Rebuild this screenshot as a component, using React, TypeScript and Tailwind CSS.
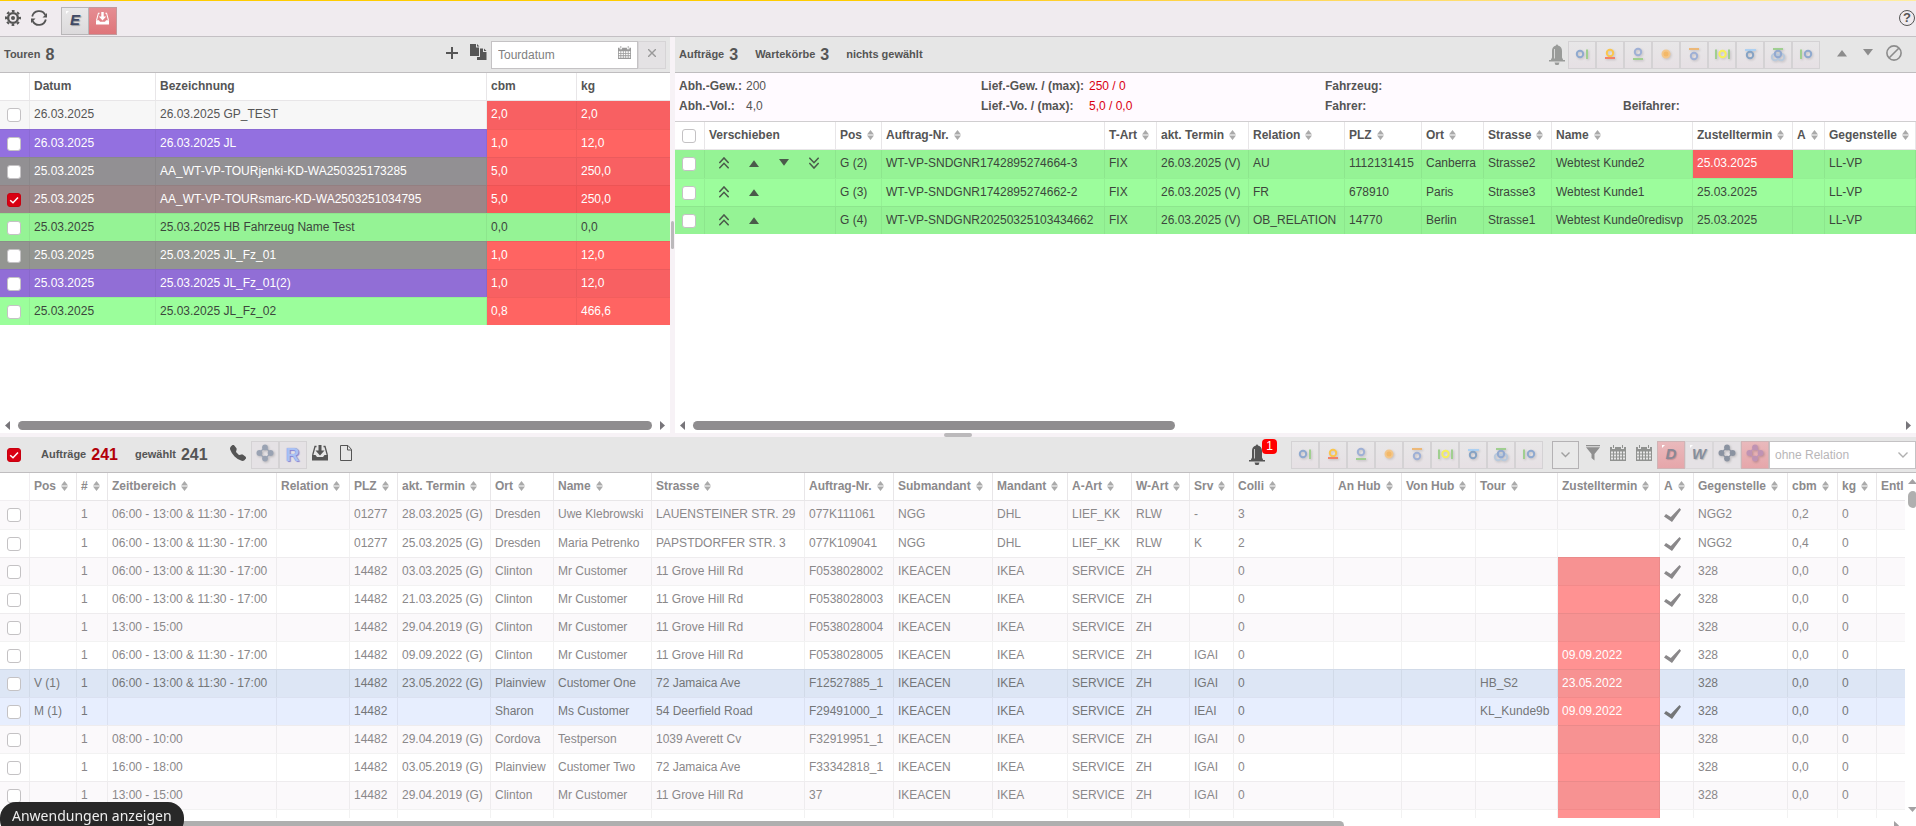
import { useState } from "react";
import type { ReactNode } from "react";
import { BsTelephoneFill } from "react-icons/bs";
import clsx from "clsx";

interface Tour {
  datum: string;
  name: string;
  cbm: string;
  kg: string;
  row: string;
  load: string;
}

const TOUREN: Tour[] = [
  { datum: "26.03.2025", name: "26.03.2025 GP_TEST", cbm: "2,0", kg: "2,0", row: "bg-[#f7f7f7] text-[#555]", load: "bg-[#f86062] text-white" },
  { datum: "26.03.2025", name: "26.03.2025 JL", cbm: "1,0", kg: "12,0", row: "bg-[#9370e0] text-white", load: "bg-[#ff6462] text-white" },
  { datum: "25.03.2025", name: "AA_WT-VP-TOURjenki-KD-WA250325173285", cbm: "5,0", kg: "250,0", row: "bg-[#929093] text-white", load: "bg-[#f86062] text-white" },
  { datum: "25.03.2025", name: "AA_WT-VP-TOURsmarc-KD-WA2503251034795", cbm: "5,0", kg: "250,0", row: "bg-[#9c8688] text-white", load: "bg-[#f9595a] text-white" },
  { datum: "25.03.2025", name: "25.03.2025 HB Fahrzeug Name Test", cbm: "0,0", kg: "0,0", row: "bg-[#95f395] text-[#3c463c]", load: "" },
  { datum: "25.03.2025", name: "25.03.2025 JL_Fz_01", cbm: "1,0", kg: "12,0", row: "bg-[#939591] text-white", load: "bg-[#ff6462] text-white" },
  { datum: "25.03.2025", name: "25.03.2025 JL_Fz_01(2)", cbm: "1,0", kg: "12,0", row: "bg-[#916ed6] text-white", load: "bg-[#f86062] text-white" },
  { datum: "25.03.2025", name: "25.03.2025 JL_Fz_02", cbm: "0,8", kg: "466,6", row: "bg-[#9bfe9b] text-[#3c463c]", load: "bg-[#ff6462] text-white" },
];

const TOUR_COLS = [
  { label: "Verschieben", w: "w-[131px]" },
  { label: "Pos", w: "w-[46px]" },
  { label: "Auftrag-Nr.", w: "w-[223px]" },
  { label: "T-Art", w: "w-[52px]" },
  { label: "akt. Termin", w: "w-[92px]" },
  { label: "Relation", w: "w-[96px]" },
  { label: "PLZ", w: "w-[77px]" },
  { label: "Ort", w: "w-[62px]" },
  { label: "Strasse", w: "w-[68px]" },
  { label: "Name", w: "w-[141px]" },
  { label: "Zustelltermin", w: "w-[100px]" },
  { label: "A", w: "w-[32px]" },
  { label: "Gegenstelle", w: "" },
];

const TOUR_AUFTRAEGE = [
  ["G (2)", "WT-VP-SNDGNR1742895274664-3", "FIX", "26.03.2025 (V)", "AU", "1112131415", "Canberra", "Strasse2", "Webtest Kunde2", "25.03.2025", "", "LL-VP"],
  ["G (3)", "WT-VP-SNDGNR1742895274662-2", "FIX", "26.03.2025 (V)", "FR", "678910", "Paris", "Strasse3", "Webtest Kunde1", "25.03.2025", "", "LL-VP"],
  ["G (4)", "WT-VP-SNDGNR20250325103434662", "FIX", "26.03.2025 (V)", "OB_RELATION", "14770", "Berlin", "Strasse1", "Webtest Kunde0redisvp", "25.03.2025", "", "LL-VP"],
];

const AUFTRAG_COLS = [
  { label: "Pos", w: "w-[47px]" },
  { label: "#", w: "w-[31px]" },
  { label: "Zeitbereich", w: "w-[169px]" },
  { label: "Relation", w: "w-[73px]" },
  { label: "PLZ", w: "w-[48px]" },
  { label: "akt. Termin", w: "w-[93px]" },
  { label: "Ort", w: "w-[63px]" },
  { label: "Name", w: "w-[98px]" },
  { label: "Strasse", w: "w-[153px]" },
  { label: "Auftrag-Nr.", w: "w-[89px]" },
  { label: "Submandant", w: "w-[99px]" },
  { label: "Mandant", w: "w-[75px]" },
  { label: "A-Art", w: "w-[64px]" },
  { label: "W-Art", w: "w-[58px]" },
  { label: "Srv", w: "w-[44px]" },
  { label: "Colli", w: "w-[100px]" },
  { label: "An Hub", w: "w-[68px]" },
  { label: "Von Hub", w: "w-[74px]" },
  { label: "Tour", w: "w-[82px]" },
  { label: "Zustelltermin", w: "w-[102px]" },
  { label: "A", w: "w-[34px]" },
  { label: "Gegenstelle", w: "w-[94px]" },
  { label: "cbm", w: "w-[50px]" },
  { label: "kg", w: "w-[39px]" },
  { label: "Entl", w: "" },
];

interface Auftrag {
  pos?: string;
  zeit?: string;
  plz: string;
  termin?: string;
  ort: string;
  name: string;
  strasse: string;
  nr: string;
  sub?: string;
  mandant?: string;
  aArt?: string;
  wArt?: string;
  srv?: string;
  colli?: string;
  tour?: string;
  zustell?: string;
  late?: boolean;
  avis?: boolean;
  gegen?: string;
  cbm?: string;
}

const ZEIT = "06:00 - 13:00 & 11:30 - 17:00";

const AUFTRAEGE: Auftrag[] = [
  { zeit: ZEIT, plz: "01277", termin: "28.03.2025 (G)", ort: "Dresden", name: "Uwe Klebrowski", strasse: "LAUENSTEINER STR. 29", nr: "077K111061", sub: "NGG", mandant: "DHL", aArt: "LIEF_KK", wArt: "RLW", srv: "-", colli: "3", late: false, avis: true, gegen: "NGG2", cbm: "0,2" },
  { zeit: ZEIT, plz: "01277", termin: "25.03.2025 (G)", ort: "Dresden", name: "Maria Petrenko", strasse: "PAPSTDORFER STR. 3", nr: "077K109041", sub: "NGG", mandant: "DHL", aArt: "LIEF_KK", wArt: "RLW", srv: "K", colli: "2", late: false, avis: true, gegen: "NGG2", cbm: "0,4" },
  { zeit: ZEIT, plz: "14482", termin: "03.03.2025 (G)", ort: "Clinton", name: "Mr Customer", strasse: "11 Grove Hill Rd", nr: "F0538028002", avis: true },
  { zeit: ZEIT, plz: "14482", termin: "21.03.2025 (G)", ort: "Clinton", name: "Mr Customer", strasse: "11 Grove Hill Rd", nr: "F0538028003", avis: true },
  { zeit: "13:00 - 15:00", plz: "14482", termin: "29.04.2019 (G)", ort: "Clinton", name: "Mr Customer", strasse: "11 Grove Hill Rd", nr: "F0538028004" },
  { zeit: ZEIT, plz: "14482", termin: "09.09.2022 (G)", ort: "Clinton", name: "Mr Customer", strasse: "11 Grove Hill Rd", nr: "F0538028005", srv: "IGAI", zustell: "09.09.2022", avis: true },
  { pos: "V (1)", zeit: ZEIT, plz: "14482", termin: "23.05.2022 (G)", ort: "Plainview", name: "Customer One", strasse: "72 Jamaica Ave", nr: "F12527885_1", srv: "IGAI", tour: "HB_S2", zustell: "23.05.2022" },
  { pos: "M (1)", plz: "14482", ort: "Sharon", name: "Ms Customer", strasse: "54 Deerfield Road", nr: "F29491000_1", srv: "IEAI", tour: "KL_Kunde9b", zustell: "09.09.2022", avis: true },
  { zeit: "08:00 - 10:00", plz: "14482", termin: "29.04.2019 (G)", ort: "Cordova", name: "Testperson", strasse: "1039 Averett Cv", nr: "F32919951_1", srv: "IGAI" },
  { zeit: "16:00 - 18:00", plz: "14482", termin: "03.05.2019 (G)", ort: "Plainview", name: "Customer Two", strasse: "72 Jamaica Ave", nr: "F33342818_1", srv: "IGAI" },
  { zeit: "13:00 - 15:00", plz: "14482", termin: "29.04.2019 (G)", ort: "Clinton", name: "Mr Customer", strasse: "11 Grove Hill Rd", nr: "37", srv: "IGAI" },
];

/* ---------- icons ---------- */

function GearIcon() {
  return (
    <svg width="16" height="16" viewBox="0 0 16 16" fill="none" stroke="#555">
      <circle cx="8" cy="8" r="4.9" strokeWidth="2.4" />
      <circle cx="8" cy="8" r="7" strokeWidth="2" strokeDasharray="2.75 2.75" strokeDashoffset="1.4" />
      <circle cx="8" cy="8" r="2" fill="#555" stroke="none" />
    </svg>
  );
}

function RefreshIcon() {
  return (
    <svg width="16" height="16" viewBox="0 0 16 16" fill="none" stroke="#555" strokeWidth="1.8">
      <path d="M1.200 6.500A7 7 0 0 1 14.300 5M14.800 9.500A7 7 0 0 1 1.700 11" />
      <path d="M16 3v4.500h-4.500zM0 13V8.500h4.500z" fill="#555" stroke="none" />
    </svg>
  );
}

function InboxIcon({ size, color }: { size: number; color: string }) {
  return (
    <svg width={size} height={size} viewBox="0 0 16 16" fill={color}>
      <path d="M0 10h3.500l1.500 2h6l1.500-2H16v5.500H0z" />
      <path d="M6.500 0h3v5.500h3L8 10.500 3.500 5.500h3z" />
      <path d="M4.500 1.500H3L.7 10M11.500 1.500H13L15.300 10" fill="none" stroke={color} strokeWidth="1.300" />
    </svg>
  );
}

function BellIcon({ color }: { color: string }) {
  return (
    <svg width="16" height="21" viewBox="0 0 16 21" fill={color}>
      <path d="M7 1.500C7 0 9 0 9 1.500c2.800.6 4 2.700 4 5.500v6.500l1.200 2.500H16v1.500H0V16h1.800L3 13.500V7c0-2.800 1.200-4.900 4-5.500z" />
      <path d="M5.500 18.500h5L9.500 21h-3z" />
      <path d="M5.500 5v9.500" stroke="#e6e6e6" strokeWidth=".8" />
    </svg>
  );
}

function CalendarIcon({ size, color, cell = "#e6e6e6" }: { size: number; color: string; cell?: string }) {
  return (
    <svg width={size} height={size} viewBox="0 0 16 16" fill={color}>
      <path d="M0 2h2v2h3V2h6v2h3V2h2v14H0zM3 0h1v3H3zM12 0h1v3h-1z" />
      {[6, 9, 12].map((y) => (
        <path
          key={y}
          d={`M1 ${y + 1.500}h2M4 ${y + 1.500}h2M7 ${y + 1.500}h2M10 ${y + 1.500}h2M13 ${y + 1.500}h2`}
          stroke={cell}
          strokeWidth="2"
        />
      ))}
    </svg>
  );
}

function CopyIcon() {
  return (
    <svg width="17" height="17" viewBox="0 0 17 17" fill="#555">
      <path d="M0 0h6v3.500h3V12H0zM7 0l2.500 2.600H7z" />
      <path d="M6.500 17v-4.500H9.500V3.500h4L17 7v10z" fill="#e6e6e6" />
      <path d="M7 16v-3h3V4.500h3v3.500h3.500V16zM14 4.500L16.500 7H14z" />
    </svg>
  );
}

function DocIcon() {
  return (
    <svg width="12" height="16" viewBox="0 0 12 16" fill="none" stroke="#555">
      <path d="M.5.5h7.500L11.500 4.500v11H.5z" />
      <path d="M7.500.5V5h4" />
    </svg>
  );
}

function FilterIcon() {
  return (
    <svg width="14" height="16" viewBox="0 0 14 16" fill="#8f8f8f">
      <path d="M0 0h14v1.200H0zM0 2.200h14L8.500 9v6.500L5.500 13V9z" />
    </svg>
  );
}

function ClusterIcon({ color }: { color: string }) {
  return (
    <svg width="18" height="18" viewBox="0 0 18 18" fill={color} className="drop-shadow-[1px_1px_1px_rgba(0,0,0,0.2)]">
      <circle cx="9" cy="3.400" r="2.900" />
      <circle cx="3.400" cy="9" r="2.900" />
      <circle cx="14.600" cy="9" r="2.900" />
      <circle cx="9" cy="14.600" r="2.900" />
      <path d="M9 3.200L3.200 9 9 14.800 14.800 9z" fill="none" stroke={color} strokeWidth="1.200" />
    </svg>
  );
}

function CheckIcon({ className }: { className: string }) {
  return (
    <svg width="17" height="14" viewBox="0 0 17 14" className={className} fill="currentColor">
      <path d="M0 8.500L2 6l4.800 3L15.500 0 17 1.800 8 14z" />
    </svg>
  );
}

function SortIcon() {
  return (
    <svg width="7" height="10" viewBox="0 0 7 10" fill="#aaa" className="shrink-0">
      <path d="M3.500 0L7 4.500H0zM3.500 10L7 5.500H0z" />
    </svg>
  );
}

function ArrowIcon({ kind }: { kind: "top" | "up" | "down" | "bottom" }) {
  return (
    <svg width="10" height="12" viewBox="0 0 10 12" fill="none" stroke="#4a5a4a" strokeWidth="1.600">
      {kind === "top" && <path d="M.3 6L5 1l4.700 5M.3 11.300L5 6.300l4.700 5" />}
      {kind === "bottom" && <path d="M.3 .7L5 5.700 9.700.7M.3 6L5 11 9.700 6" />}
      {kind === "up" && <path d="M0 10L5 3.200 10 10z" fill="#4a5a4a" stroke="none" />}
      {kind === "down" && <path d="M0 2L5 8.800 10 2z" fill="#4a5a4a" stroke="none" />}
    </svg>
  );
}

const BLUE = "#8fa9cf";
const GREEN = "#a0cf90";

const MARKERS: { title: string; art: ReactNode }[] = [
  { title: "Danach", art: <><circle cx="11" cy="12" r="3.200" stroke={BLUE} /><path d="M18 7.500v9.500" stroke={GREEN} /></> },
  { title: "Unten rot", art: <><circle cx="13" cy="11" r="3.200" stroke="#fac64e" /><path d="M8 16h10" stroke="#f2826a" /></> },
  { title: "Unten", art: <><circle cx="13" cy="10" r="3.200" stroke="#9fb0d5" /><path d="M8 17h10" stroke={GREEN} /></> },
  { title: "Punkt", art: <><circle cx="13" cy="12" r="3.500" stroke="#f3c68a" fill="#f3b868" /></> },
  { title: "Oben", art: <><path d="M8 7h10" stroke="#ecb878" /><circle cx="13" cy="14" r="3.200" stroke="#9fb0d5" /></> },
  { title: "Zwischen", art: <><path d="M7 7.500v9.500M20 7.500v9.500" stroke={GREEN} /><circle cx="13.500" cy="12" r="3.200" stroke="#f6f05a" /></> },
  { title: "Oben blau", art: <><path d="M8 8h11" stroke="#acd0f2" /><circle cx="13" cy="13" r="3.200" stroke="#86a3c4" /></> },
  { title: "Gruppe", art: <><path d="M8 7h10" stroke={GREEN} /><circle cx="10" cy="15" r="3.200" stroke="#b9c9dc" /><circle cx="16" cy="15" r="3.200" stroke="#b9c9dc" /><circle cx="13" cy="12" r="3.200" stroke="#92a9d0" /></> },
  { title: "Davor", art: <><path d="M8 7.500v9.500" stroke={GREEN} /><circle cx="15" cy="12" r="3.200" stroke={BLUE} /></> },
];

/* ---------- shared parts ---------- */

function MarkerButtons() {
  return (
    <div className="flex">
      {MARKERS.map((m) => (
        <button
          key={m.title}
          aria-label={m.title}
          className="h-7 w-7 border border-[#d4d2d4] bg-linear-to-b from-[#e8e7e8] to-[#e6e0e4]"
        >
          <svg width="26" height="26" viewBox="0 0 26 26" fill="none" strokeWidth="2" className="drop-shadow-[1px_1px_1px_rgba(0,0,0,0.15)]">
            {m.art}
          </svg>
        </button>
      ))}
    </div>
  );
}

/* Bold italic letter with the white dog-ear of a toggle button */
function LetterButton({ letter, className }: { letter: string; className: string }) {
  return (
    <button className={clsx("relative h-7 w-7 border pb-[3px] text-[15px] leading-none font-bold italic", className)}>
      <svg width="3" height="3" viewBox="0 0 3 3" className="absolute top-[3px] left-1" fill="#fff">
        <path d="M0 0h3L0 3z" />
      </svg>
      {letter}
    </button>
  );
}

function Check({ label, defaultChecked = false }: { label: string; defaultChecked?: boolean }) {
  const [checked, setChecked] = useState(defaultChecked);
  return (
    <span className="relative block h-[14px] w-[14px] shrink-0">
      <input
        type="checkbox"
        aria-label={label}
        checked={checked}
        onChange={() => setChecked(!checked)}
        className="block h-[14px] w-[14px] appearance-none rounded-[3px] border border-[#c4c2c4] bg-white checked:border-[#c8000f] checked:bg-[#d90012]"
      />
      {checked && (
        <svg width="14" height="14" viewBox="0 0 14 14" className="pointer-events-none absolute inset-0" fill="none" stroke="#fff" strokeWidth="1.500">
          <path d="M3.200 7.200L6 9.800 11 4.400" />
        </svg>
      )}
    </span>
  );
}

function Th({ label, sort = true, className }: { label: string; sort?: boolean; className?: string }) {
  return (
    <th className={clsx("h-7 border-r border-b border-[#e8e6e8] px-1 pb-[2px] text-left font-bold", className)}>
      <span className="flex items-center gap-[5px]">
        {label}
        {sort && <SortIcon />}
      </span>
    </th>
  );
}

const CELL = "h-7 border-r border-black/5 whitespace-nowrap";
const TEXT = "pb-[2px] pl-1";

function HScroll({ thumb }: { thumb: string }) {
  return (
    <div aria-hidden="true" className="flex h-3 shrink-0 items-start gap-2 px-[5px]">
      <svg width="5" height="9" viewBox="0 0 5 9" fill="#77757a"><path d="M5 0v9L0 4.500z" /></svg>
      <div className="flex-1">
        <div className={clsx("h-[9px] rounded-full bg-[#8f8d8f]", thumb)} />
      </div>
      <svg width="5" height="9" viewBox="0 0 5 9" fill="#77757a"><path d="M0 0v9l5-4.500z" /></svg>
    </div>
  );
}

const BAR = "flex h-9 shrink-0 items-center border-b border-[#bfbdbf] bg-[#e6e6e6] text-[11px] font-bold";

/* ---------- panels ---------- */

function TourenPanel() {
  return (
    <section className="flex min-w-0 flex-col overflow-hidden bg-white">
      <div className={clsx(BAR, "pr-1 pl-1")}>
        <span>Touren</span>
        <span className="ml-[5px] text-base">8</span>
        <button aria-label="Tour anlegen" className="mb-1 ml-auto">
          <svg width="12" height="12" viewBox="0 0 12 12" stroke="#555" strokeWidth="2"><path d="M6 0v12M0 6h12" /></svg>
        </button>
        <button aria-label="Tour kopieren" className="mb-1 ml-3"><CopyIcon /></button>
        <div className="ml-1 flex h-7 w-[147px] items-center border border-[#c4c2c4] bg-white pr-[6px] pl-[6px]">
          <input aria-label="Tourdatum" placeholder="Tourdatum" className="min-w-0 flex-1 text-xs font-normal placeholder:text-[#808080]" />
          <div className="mb-1"><CalendarIcon size={13} color="#999" cell="#fff" /></div>
        </div>
        <button aria-label="Tourdatum löschen" className="flex h-7 w-7 items-center justify-center border border-[#d6d4d6] bg-[#e4e2e4] pb-1">
          <svg width="8" height="8" viewBox="0 0 8 8" stroke="#999" strokeWidth="1.400"><path d="M0 0l8 8M8 0L0 8" /></svg>
        </button>
      </div>
      <div className="min-h-0 flex-1 overflow-hidden">
        <table className="w-full table-fixed border-separate border-spacing-0">
          <colgroup>
            <col className="w-[30px]" />
            <col className="w-[126px]" />
            <col />
            <col className="w-[90px]" />
            <col className="w-[93px]" />
          </colgroup>
          <thead>
            <tr>
              <th className="border-r border-b border-[#e8e6e8]" />
              <Th label="Datum" sort={false} />
              <Th label="Bezeichnung" sort={false} />
              <Th label="cbm" sort={false} />
              <Th label="kg" sort={false} className="border-r-0" />
            </tr>
          </thead>
          <tbody>
            {TOUREN.map((t, i) => {
              const cell = clsx(CELL, i > 0 && "border-t");
              const text = clsx(cell, TEXT);
              return (
                <tr key={t.name} className={t.row}>
                  <td className={clsx(cell, "pl-[7px]")}>
                    <Check label={t.name} defaultChecked={i === 3} />
                  </td>
                  <td className={text}>{t.datum}</td>
                  <td className={text}>{t.name}</td>
                  <td className={clsx(text, t.load)}>{t.cbm}</td>
                  <td className={clsx(text, t.load, "border-r-0")}>{t.kg}</td>
                </tr>
              );
            })}
          </tbody>
        </table>
      </div>
      <HScroll thumb="w-full" />
    </section>
  );
}

function TourDetailPanel() {
  return (
    <section className="flex min-w-0 flex-col overflow-hidden bg-white">
      <div className={clsx(BAR, "pr-[14px] pl-1")}>
        <span>Aufträge</span>
        <span className="ml-[5px] text-base">3</span>
        <span className="ml-[17px]">Wartekörbe</span>
        <span className="ml-[5px] text-base">3</span>
        <span className="ml-[17px]">nichts gewählt</span>
        <button aria-label="Benachrichtigungen" className="mr-[3px] ml-auto"><BellIcon color="#999b99" /></button>
        <MarkerButtons />
        <button aria-label="Nach oben" className="mb-1 ml-[17px]">
          <svg width="10" height="10" viewBox="0 0 10 10" fill="#8c8c8c"><path d="M0 8.500L5 2l5 6.500z" /></svg>
        </button>
        <button aria-label="Nach unten" className="mb-1 ml-4">
          <svg width="10" height="10" viewBox="0 0 10 10" fill="#8c8c8c"><path d="M0 1h10L5 7.500z" /></svg>
        </button>
        <button aria-label="Sperren" className="mb-1 ml-[13px]">
          <svg width="16" height="16" viewBox="0 0 16 16" fill="none" stroke="#8c8c8c" strokeWidth="1.600"><circle cx="8" cy="8" r="7.100" /><path d="M13 3L3 13" /></svg>
        </button>
      </div>
      <div className="grid h-[49px] shrink-0 grid-cols-[302fr_344fr_298fr_293fr] items-start border-b border-[#d0ced0] bg-[#fffaff] pt-[3px] pl-1 leading-5">
        <dl className="grid grid-cols-[67px_1fr]">
          <dt className="font-bold">Abh.-Gew.:</dt>
          <dd>200</dd>
          <dt className="font-bold">Abh.-Vol.:</dt>
          <dd>4,0</dd>
        </dl>
        <dl className="grid grid-cols-[108px_1fr]">
          <dt className="font-bold">Lief.-Gew. / (max):</dt>
          <dd className="text-[#d90012]">250 / 0</dd>
          <dt className="font-bold">Lief.-Vo. / (max):</dt>
          <dd className="text-[#d90012]">5,0 / 0,0</dd>
        </dl>
        <div className="font-bold">
          <p>Fahrzeug:</p>
          <p>Fahrer:</p>
        </div>
        <p className="pt-5 font-bold">Beifahrer:</p>
      </div>
      <div className="min-h-0 flex-1 overflow-hidden">
        <table className="w-full min-w-[1240px] table-fixed border-separate border-spacing-0">
          <colgroup>
            <col className="w-[30px]" />
            {TOUR_COLS.map((c) => <col key={c.label} className={c.w} />)}
          </colgroup>
          <thead>
            <tr>
              <th className="h-7 border-r border-b border-[#e8e6e8] pl-[7px]"><Check label="Alle wählen" /></th>
              {TOUR_COLS.map((c) => <Th key={c.label} label={c.label} sort={c.label !== "Verschieben"} />)}
            </tr>
          </thead>
          <tbody>
            {TOUR_AUFTRAEGE.map((row, i) => {
              const cell = clsx(CELL, i > 0 && "border-t");
              const text = clsx(cell, TEXT);
              return (
                <tr key={row[1]} className={clsx("text-[#3c463c]", i % 2 ? "bg-[#9cfd9c]" : "bg-[#95f395]")}>
                  <td className={clsx(cell, "pl-[7px]")}><Check label={row[1]} /></td>
                  <td className={text}>
                    <div className="grid grid-cols-[repeat(4,30px)]">
                      <button aria-label="Ganz nach oben" className="flex justify-center"><ArrowIcon kind="top" /></button>
                      <button aria-label="Nach oben" className="flex justify-center"><ArrowIcon kind="up" /></button>
                      {i === 0 && <button aria-label="Nach unten" className="flex justify-center"><ArrowIcon kind="down" /></button>}
                      {i === 0 && <button aria-label="Ganz nach unten" className="flex justify-center"><ArrowIcon kind="bottom" /></button>}
                    </div>
                  </td>
                  {row.map((v, c) => (
                    <td key={c} className={clsx(text, i === 0 && c === 9 && "bg-[#f86062] text-white")}>{v}</td>
                  ))}
                </tr>
              );
            })}
          </tbody>
        </table>
      </div>
      <HScroll thumb="w-[40%]" />
    </section>
  );
}

function rowTone(a: Auftrag, i: number) {
  if (a.pos === "V (1)") return "bg-[#dde6f5] text-[#747678]";
  if (a.pos === "M (1)") return "bg-[#e7eefe] text-[#747678]";
  return i % 2 ? "bg-white text-[#8a888a]" : "bg-[#fbf9fb] text-[#8a888a]";
}

function AuftraegeTable() {
  return (
    <table className="w-full min-w-[1904px] table-fixed border-separate border-spacing-0">
      <colgroup>
        <col className="w-[30px]" />
        {AUFTRAG_COLS.map((c) => <col key={c.label} className={c.w} />)}
      </colgroup>
      <thead className="text-[#8c8a8c]">
        <tr>
          <th className="border-r border-b border-[#f1eef1]" />
          {AUFTRAG_COLS.map((c) => (
            <Th key={c.label} label={c.label} sort={c.label !== "Entl"} className={c.label === "Entl" ? "border-r-0 pr-0" : ""} />
          ))}
        </tr>
      </thead>
      <tbody>
        {AUFTRAEGE.map((a, i) => {
          const cell = clsx(CELL, i > 0 && "border-t");
          const text = clsx(cell, TEXT);
          const late = a.late !== false;
          const before = [a.pos, "1", a.zeit, "", a.plz, a.termin, a.ort, a.name, a.strasse, a.nr, a.sub ?? "IKEACEN", a.mandant ?? "IKEA", a.aArt ?? "SERVICE", a.wArt ?? "ZH", a.srv, a.colli ?? "0", "", "", a.tour];
          return (
            <tr key={a.nr} className={rowTone(a, i)}>
              <td className={clsx(cell, "pl-[7px]")}><Check label={a.nr} /></td>
              {before.map((v, c) => <td key={c} className={text}>{v}</td>)}
              <td className={clsx(text, late && "text-white", late && (i % 2 ? "bg-[#ff9292]" : "bg-[#f79292]"))}>{a.zustell}</td>
              <td className={clsx(cell, "pl-1")}>{a.avis && <CheckIcon className="block" />}</td>
              <td className={text}>{a.gegen ?? "328"}</td>
              <td className={text}>{a.cbm ?? "0,0"}</td>
              <td className={text}>0</td>
              <td className={clsx(cell, "border-r-0")} />
            </tr>
          );
        })}
        <tr>
          {Array.from({ length: 26 }).map((_, c) => (
            <td key={c} className={clsx(CELL, "border-t", c === 20 && "bg-[#ff9292]", c === 25 && "border-r-0")} />
          ))}
        </tr>
      </tbody>
    </table>
  );
}

function AuftraegePanel() {
  return (
    <section className="flex min-h-0 flex-[389_1_0px] flex-col overflow-hidden bg-white">
      <div className={clsx(BAR, "pl-[7px]")}>
        <Check label="Alle Aufträge wählen" defaultChecked />
        <span className="ml-5">Aufträge</span>
        <span className="ml-[5px] text-base text-[#b30009]">241</span>
        <span className="ml-[17px]">gewählt</span>
        <span className="ml-[5px] text-base">241</span>
        <button aria-label="Anrufen" className="mb-1 ml-[22px]"><BsTelephoneFill size={16} /></button>
        <button aria-label="Gruppieren" className="ml-[5px] flex h-7 w-7 items-center justify-center border border-[#d4d2d4] bg-[#e5e2e5] pb-1">
          <ClusterIcon color="#9aa3b3" />
        </button>
        <button className="h-7 w-7 border border-[#d4d2d4] bg-[#e5e2e5] text-[19px] leading-none text-[#a9c0f4] [text-shadow:0_0_1px_#6f78b8,1px_1px_1px_#8a84d8]">
          R
        </button>
        <button aria-label="Import" className="mb-1 ml-[5px]"><InboxIcon size={16} color="#555" /></button>
        <button aria-label="Dokument" className="mb-1 ml-3"><DocIcon /></button>

        <button aria-label="1 neue Meldung" className="relative ml-auto">
          <BellIcon color="#555" />
          <span className="absolute -top-[5px] left-[13px] h-[15px] w-[15px] rounded-[4px] bg-[#ff0000] text-xs leading-[15px] font-normal text-white">1</span>
        </button>
        <div className="ml-[26px]"><MarkerButtons /></div>
        <button aria-label="Mehr" className="ml-[9px] flex h-7 w-[27px] items-center justify-center border border-[#b4b2b4] bg-[#e9e9e9]">
          <svg width="9" height="6" viewBox="0 0 9 6" fill="none" stroke="#a0a0a0" strokeWidth="1.400"><path d="M.5.5l4 4 4-4" /></svg>
        </button>
        <button aria-label="Filter" className="mb-1 ml-[7px]"><FilterIcon /></button>
        <button aria-label="Datum von" className="mb-1 ml-[10px]"><CalendarIcon size={16} color="#909290" /></button>
        <button aria-label="Datum bis" className="mb-1 ml-[10px]"><CalendarIcon size={16} color="#909290" /></button>
        <LetterButton letter="D" className="ml-[5px] border-[#d0b4b6] bg-linear-to-b from-[#e9b9bc] to-[#e6a6aa] text-[#8a8794] [text-shadow:1px_1px_1px_#c08f94]" />
        <LetterButton letter="W" className="border-[#d9d7d9] bg-[#e5e2e5] text-[#868e9c] [text-shadow:1px_1px_1px_#bbb]" />
        <button aria-label="Gruppen" className="flex h-7 w-7 items-center justify-center border border-[#d9d7d9] bg-[#e5e2e5] pb-1"><ClusterIcon color="#8b93a1" /></button>
        <button aria-label="Gruppen rot" className="flex h-7 w-7 items-center justify-center border border-[#d0b4b6] bg-linear-to-b from-[#e9b9bc] to-[#e6a6aa] pb-1"><ClusterIcon color="#bf93b4" /></button>
        <div className="relative h-7 w-[147px]">
          <select aria-label="Relation" className="h-7 w-full appearance-none border border-[#c4c2c4] bg-white pl-[5px] text-xs font-normal text-[#b8b6b8]">
            <option>ohne Relation</option>
          </select>
          <svg width="10" height="6" viewBox="0 0 10 6" fill="none" stroke="#b0b0b0" strokeWidth="1.400" className="pointer-events-none absolute top-[11px] right-[8px]"><path d="M.5.5L5 5 9.500.5" /></svg>
        </div>
      </div>
      <div className="flex min-h-0 flex-1">
        <div className="min-w-0 flex-1 overflow-hidden">
          <AuftraegeTable />
        </div>
        <div aria-hidden="true" className="flex w-[11px] flex-col items-end overflow-hidden pt-[6px] pb-[6px]">
          <svg width="8" height="5" viewBox="0 0 8 5" fill="#a3a1a3"><path d="M0 5h8V4L4.500 0z" /></svg>
          <div className="mt-[7px] h-[17px] w-2 rounded-l-[5px] rounded-r-[3px] bg-[#afafaf]" />
          <svg width="8" height="5" viewBox="0 0 8 5" fill="#a3a1a3" className="mt-auto"><path d="M0 0h8v1L4.500 5z" /></svg>
        </div>
      </div>
      <div aria-hidden="true" className="flex h-2 shrink-0 items-start gap-2 overflow-hidden pt-[3px] pr-[17px] pl-[18px]">
        <div className="flex-1">
          <div className="h-[9px] w-[71%] rounded-full bg-[#afafaf]" />
        </div>
        <svg width="5" height="9" viewBox="0 0 5 9" fill="#a3a1a3"><path d="M0 0v9l5-4.500z" /></svg>
      </div>
    </section>
  );
}

export default function App() {
  return (
    <div className="flex h-screen flex-col overflow-hidden bg-[#f7f2f6] font-['Liberation_Sans',Arial,sans-serif] text-xs text-[#555]">
      <div className="h-px shrink-0 bg-linear-to-r from-[#ffcc00] from-50% to-[#ffeda0]" />
      <header className="flex h-9 shrink-0 items-center border-b border-[#c4c0c4] bg-[#f0ebef] pl-[5px]">
        <button aria-label="Einstellungen" className="mb-[2px]"><GearIcon /></button>
        <button aria-label="Aktualisieren" className="mb-[2px] ml-[10px]"><RefreshIcon /></button>
        <LetterButton
          letter="E"
          className="mt-1 ml-[14px] border-[#b8b6b8] bg-linear-to-b from-[#e9e8e9] to-[#dcdadc] text-[#3f4a66] [text-shadow:1px_1px_1px_#999]"
        />
        <button aria-label="Eingang" className="mt-1 flex h-7 w-7 items-center justify-center border border-l-0 border-[#c39a9d] bg-linear-to-b from-[#e58d92] to-[#df757a] pb-1">
          <InboxIcon size={13} color="#fff" />
        </button>
        <button aria-label="Hilfe" className="mr-px mb-[2px] ml-auto flex h-4 w-4 items-center justify-center rounded-full border border-[#555] text-[13px] leading-none font-bold">?</button>
      </header>

      <main className="flex min-h-0 flex-1 flex-col">
        <div className="grid min-h-0 flex-[396_1_0px] grid-cols-[670fr_5px_1241fr] grid-rows-[minmax(0,1fr)]">
          <TourenPanel />
          <div className="flex items-center justify-center">
            <div className="h-7 w-[3px] rounded-full bg-[#bbb9bb]" />
          </div>
          <TourDetailPanel />
        </div>
        <div className="flex h-1 shrink-0 justify-center">
          <div className="h-1 w-7 rounded-full bg-[#bbb9bb]" />
        </div>
        <AuftraegePanel />
      </main>

      <div role="tooltip" className="fixed -bottom-[10px] left-0 h-[34px] rounded-2xl bg-[#282828] px-3 font-['Noto_Sans',sans-serif] text-sm leading-7 text-[#eee]">
        Anwendungen anzeigen
      </div>
    </div>
  );
}
